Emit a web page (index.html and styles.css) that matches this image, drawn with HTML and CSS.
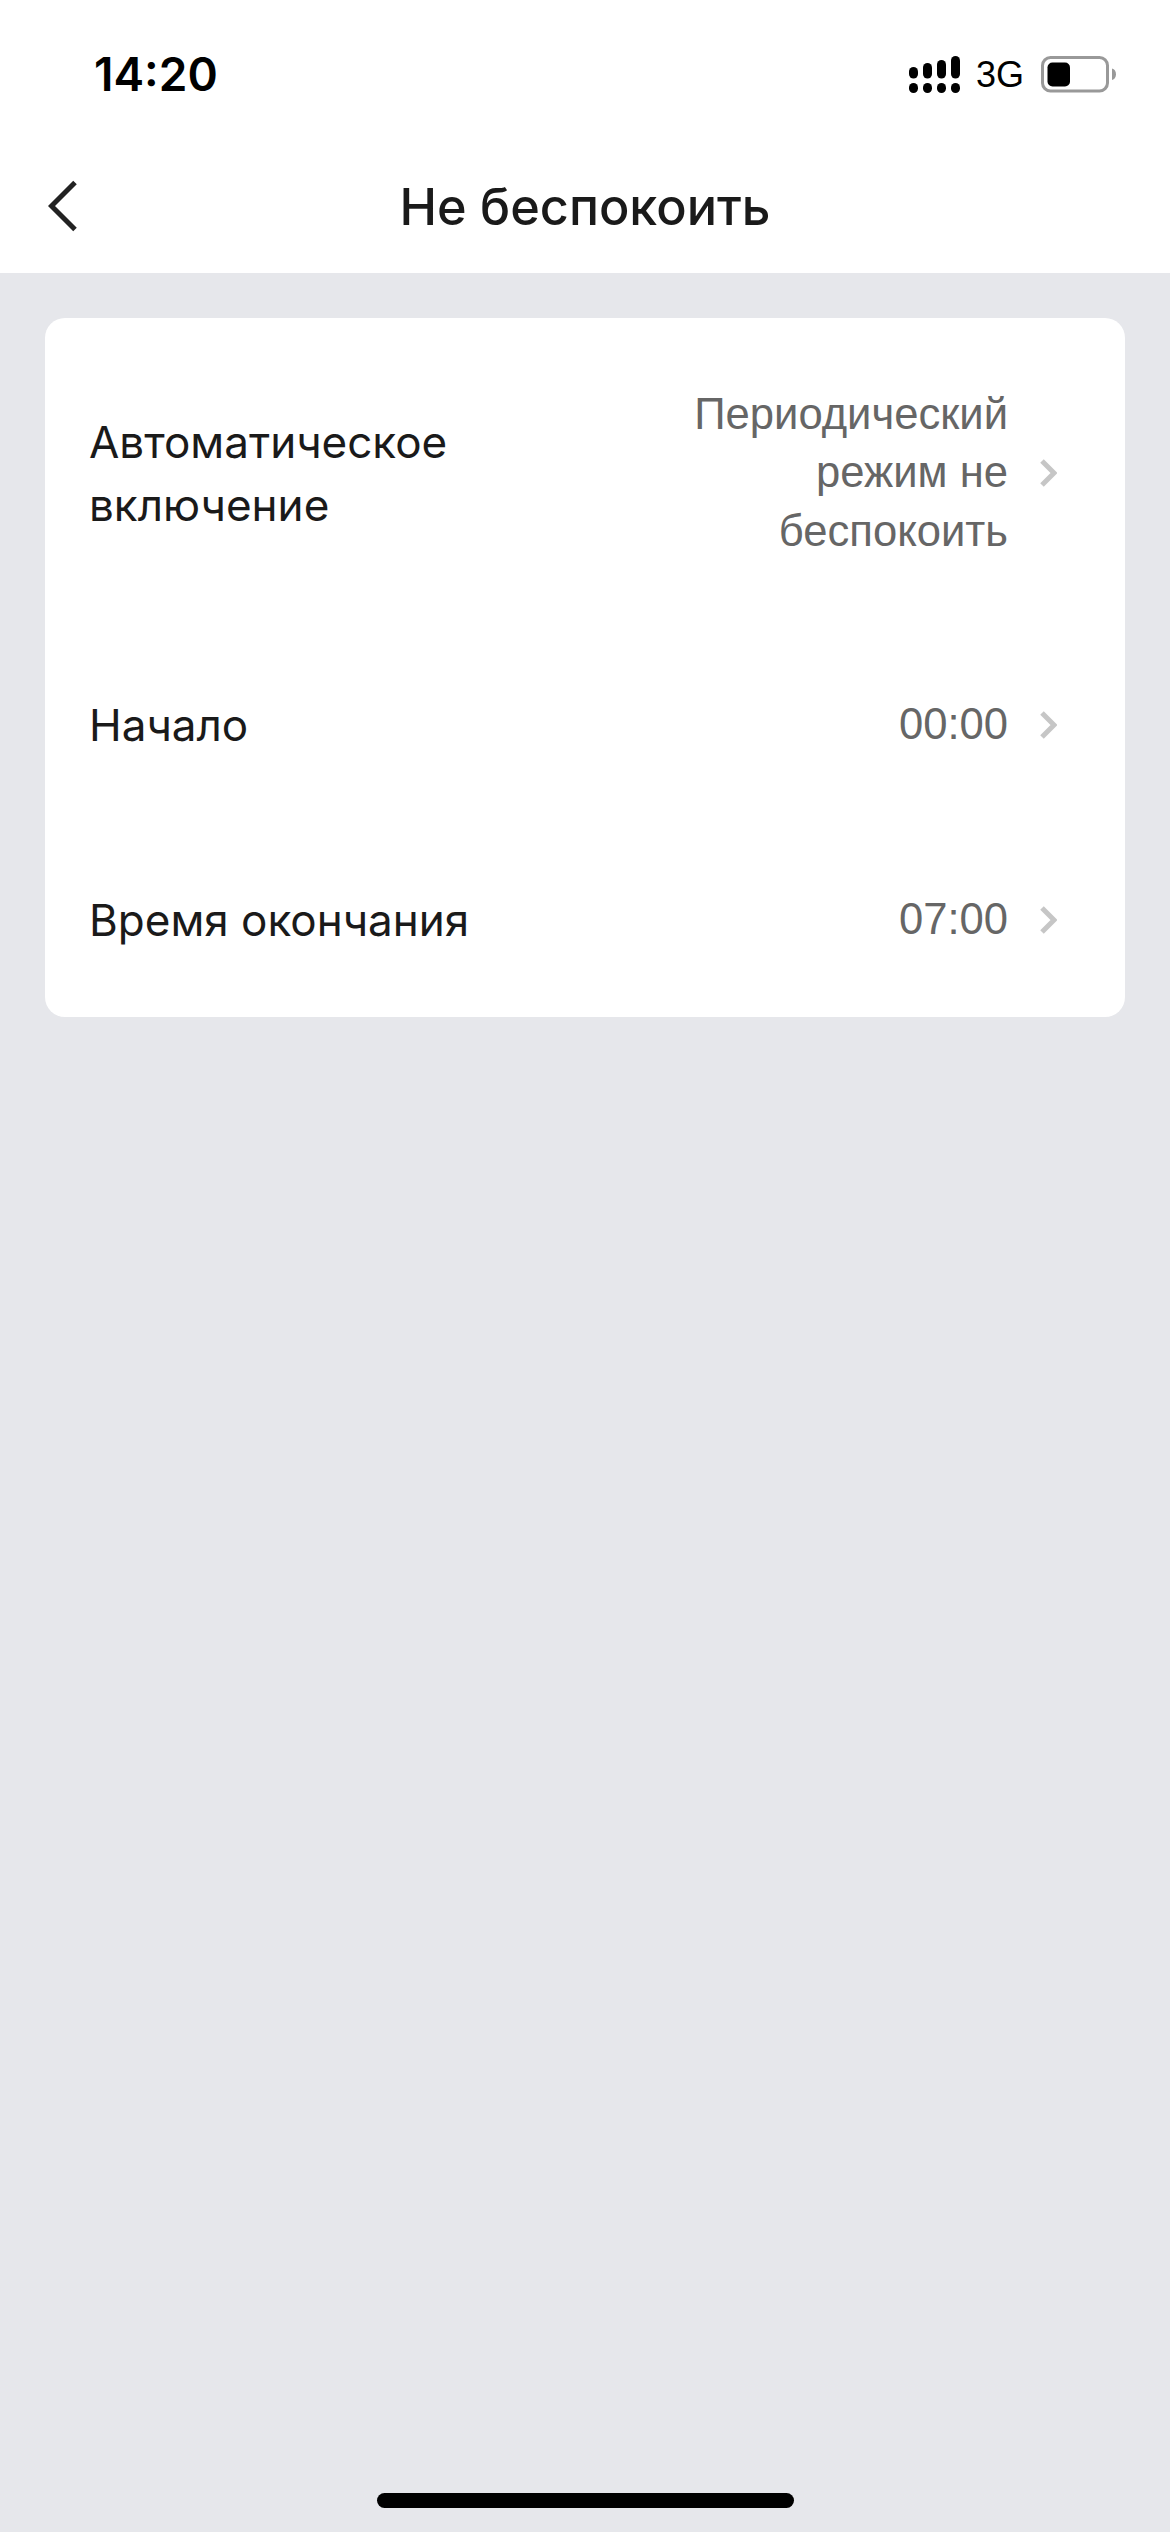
FILE: index.html
```html
<!DOCTYPE html>
<html lang="ru">
<head>
<meta charset="utf-8">
<title>Не беспокоить</title>
<link rel="stylesheet" href="styles.css">
</head>
<body>
<div class="screen">
  <header class="top">
    <div class="status">
      <span class="time">14:20</span>
      <div class="status-icons">
        <svg class="signal" width="51" height="37" viewBox="0 0 51 37" fill="#000">
          <rect x="0" y="27" width="9" height="10" rx="4.5"/><rect x="14" y="27" width="9" height="10" rx="4.5"/><rect x="28" y="27" width="9" height="10" rx="4.5"/><rect x="42" y="27" width="9" height="10" rx="4.5"/>
          <rect x="0" y="11" width="9" height="11.5" rx="4.5"/><rect x="14" y="7" width="9" height="15.5" rx="4.5"/><rect x="28" y="4" width="9" height="18.5" rx="4.5"/><rect x="42" y="0" width="9" height="22.5" rx="4.5"/>
        </svg>
        <span class="net">3G</span>
        <svg class="battery" width="75" height="37" viewBox="0 0 75 37">
          <rect x="1.5" y="1.5" width="65" height="33.5" rx="8" fill="none" stroke="#999" stroke-width="3"/>
          <rect x="6.5" y="6.5" width="22.5" height="24" rx="5" fill="#000"/>
          <path d="M71 12.5c2.6.6 4 3 4 5.7s-1.400 5.100-4 5.700z" fill="#999"/>
        </svg>
      </div>
    </div>
    <nav class="nav">
      <svg class="back" width="30" height="52" viewBox="0 0 30 52" fill="none" stroke="#222" stroke-width="5">
        <path d="M27 2.500 3.500 26 27 49.500"/>
      </svg>
      <h1 class="title">Не беспокоить</h1>
    </nav>
  </header>
  <main class="content">
    <section class="card">
      <div class="row row-tall">
        <div class="label">Автоматическое<br>включение</div>
        <div class="value value-multi">Периодический<br>режим не<br>беспокоить</div>
        <svg class="chev" width="18" height="30" viewBox="0 0 18 30" fill="none" stroke="#c6c6c6" stroke-width="5"><path d="M3 3l12 12L3 27"/></svg>
      </div>
      <div class="row">
        <div class="label">Начало</div>
        <div class="value">00:00</div>
        <svg class="chev" width="18" height="30" viewBox="0 0 18 30" fill="none" stroke="#c6c6c6" stroke-width="5"><path d="M3 3l12 12L3 27"/></svg>
      </div>
      <div class="row">
        <div class="label">Время окончания</div>
        <div class="value">07:00</div>
        <svg class="chev" width="18" height="30" viewBox="0 0 18 30" fill="none" stroke="#c6c6c6" stroke-width="5"><path d="M3 3l12 12L3 27"/></svg>
      </div>
    </section>
    <div class="home-wrap"><div class="home"></div></div>
  </main>
</div>
</body>
</html>
```
FILE: styles.css
```css
* { box-sizing: border-box; }
html, body { margin: 0; padding: 0; }
body { font-family: "Liberation Sans", Arial, sans-serif; background: #e6e7eb; }
.screen { width: 1170px; height: 2532px; display: flex; flex-direction: column; overflow: hidden; }
.top { height: 273px; background: #fff; display: flex; flex-direction: column; }
.status { height: 100px; padding: 56px 54px 0 94px; display: flex; justify-content: space-between; align-items: flex-start; }
.time { font-family: Inter, sans-serif; font-weight: 600; font-size: 46px; line-height: 37px; color: #000; }
.status-icons { display: flex; align-items: flex-start; }
.net { font-size: 36px; line-height: 37px; margin-left: 16px; margin-right: 17px; color: #000; }
.nav { flex: 1; position: relative; display: flex; align-items: center; justify-content: center; padding-top: 41px; }
.back { position: absolute; left: 48px; top: 80px; }
.title { margin: 0; font-family: Inter, sans-serif; font-weight: 500; font-size: 50.4px; line-height: 60px; color: #1a1a1a; }
.content { flex: 1; display: flex; flex-direction: column; padding: 45px 45px 24px; }
.card { background: #fff; border-radius: 20px; padding: 0 45px; }
.row { height: 195px; display: flex; align-items: center; }
.row-tall { height: 309px; }
.label { flex: 1; padding-top: 2px; margin-left: -1px; font-family: Inter, sans-serif; font-size: 44px; line-height: 63px; color: #1a1a1a; }
.value { font-size: 43.6px; line-height: 58.500px; color: #666; text-align: right; }
.chev { margin-left: 31px; margin-right: 23px; }
.home-wrap { flex: 1; display: flex; align-items: flex-end; justify-content: center; }
.home { width: 417px; height: 15px; background: #000; border-radius: 8px; }
```
